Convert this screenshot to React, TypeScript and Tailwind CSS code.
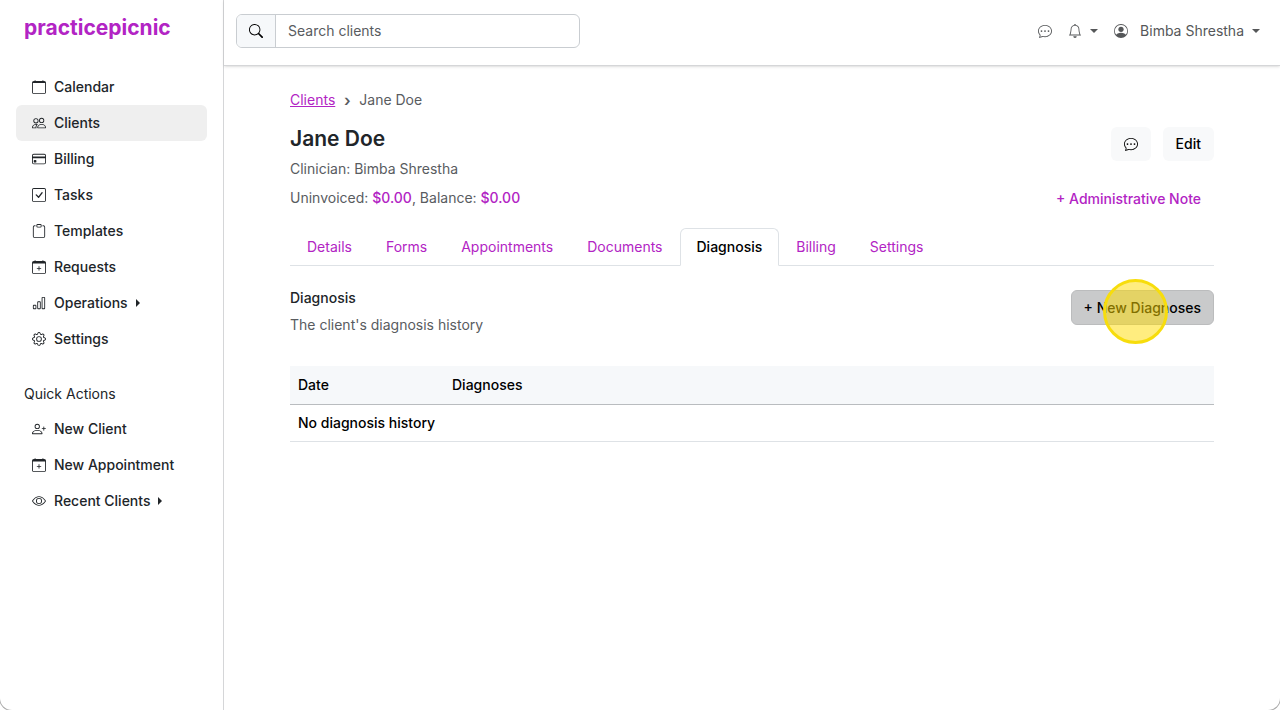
import { useState } from 'react';
import type { IconType } from 'react-icons';
import {
  BsBarChart,
  BsBell,
  BsChatDots,
  BsCheckSquare,
  BsClipboard,
  BsEye,
  BsGear,
  BsPeople,
  BsPersonCircle,
  BsPersonPlus,
  BsSearch,
} from 'react-icons/bs';

type NavItem = {
  label: string;
  icon: IconType;
  hasMenu?: boolean;
};

// Calendar outline with a solid header bar
const CalendarIcon: IconType = ({ className }) => (
  <svg viewBox="0 0 16 16" fill="currentColor" className={className}>
    <path d="M3.5 0a.5.5 0 0 1 .5.5V1h8V.5a.5.5 0 0 1 1 0V1h1a2 2 0 0 1 2 2v11a2 2 0 0 1-2 2H2a2 2 0 0 1-2-2V3a2 2 0 0 1 2-2h1V.5a.5.5 0 0 1 .5-.5zM1 3.5V14a1 1 0 0 0 1 1h12a1 1 0 0 0 1-1V3.500z" />
  </svg>
);

const CalendarPlusIcon: IconType = ({ className }) => (
  <svg viewBox="0 0 16 16" fill="currentColor" className={className}>
    <path d="M3.5 0a.5.5 0 0 1 .5.5V1h8V.5a.5.5 0 0 1 1 0V1h1a2 2 0 0 1 2 2v11a2 2 0 0 1-2 2H2a2 2 0 0 1-2-2V3a2 2 0 0 1 2-2h1V.5a.5.5 0 0 1 .5-.5zM1 4v10a1 1 0 0 0 1 1h12a1 1 0 0 0 1-1V4z" />
    <path d="M8 6.8a.5.5 0 0 1 .5.5V9h1.700a.5.5 0 0 1 0 1H8.500v1.700a.5.5 0 0 1-1 0V10H5.800a.5.5 0 0 1 0-1h1.700V7.300a.5.5 0 0 1 .5-.5z" />
  </svg>
);

const CardIcon: IconType = ({ className }) => (
  <svg viewBox="0 0 16 16" fill="currentColor" className={className}>
    <path d="M0 4a2 2 0 0 1 2-2h12a2 2 0 0 1 2 2v8a2 2 0 0 1-2 2H2a2 2 0 0 1-2-2zm2-1a1 1 0 0 0-1 1v1h14V4a1 1 0 0 0-1-1zm13 4H1v5a1 1 0 0 0 1 1h12a1 1 0 0 0 1-1z" />
    <path d="M2 10a1 1 0 0 1 1-1h1a1 1 0 0 1 1 1v1a1 1 0 0 1-1 1H3a1 1 0 0 1-1-1z" />
  </svg>
);

const mainNav: NavItem[] = [
  { label: 'Calendar', icon: CalendarIcon },
  { label: 'Clients', icon: BsPeople },
  { label: 'Billing', icon: CardIcon },
  { label: 'Tasks', icon: BsCheckSquare },
  { label: 'Templates', icon: BsClipboard },
  { label: 'Requests', icon: CalendarPlusIcon },
  { label: 'Operations', icon: BsBarChart, hasMenu: true },
  { label: 'Settings', icon: BsGear },
];

const quickActions: NavItem[] = [
  { label: 'New Client', icon: BsPersonPlus },
  { label: 'New Appointment', icon: CalendarPlusIcon },
  { label: 'Recent Clients', icon: BsEye, hasMenu: true },
];

const tabs = ['Details', 'Forms', 'Appointments', 'Documents', 'Diagnosis', 'Billing', 'Settings'];

const CaretRight = () => (
  <svg viewBox="0 0 4 8" fill="currentColor" className="ml-2 h-2 w-1">
    <path d="M0 0l4 4-4 4z" />
  </svg>
);

const CaretDown = () => (
  <svg viewBox="0 0 8 4" fill="currentColor" className="h-1 w-2">
    <path d="M0 0h8L4 4z" />
  </svg>
);

const NavList = ({ items, active }: { items: NavItem[]; active?: string }) => (
  <ul>
    {items.map(({ label, icon: Icon, hasMenu }) => (
      <li key={label}>
        <a
          href="#"
          className={`flex h-9 items-center rounded-md px-4 ${label === active ? 'bg-[#efefef]' : 'hover:bg-gray-50'}`}
        >
          <Icon className="mr-2 h-3.5 w-3.5 shrink-0" />
          {label}
          {hasMenu && <CaretRight />}
        </a>
      </li>
    ))}
  </ul>
);

const Sidebar = () => (
  <aside className="w-56 shrink-0 border-r border-[#d5d6d8] px-4 pt-3 text-[#212529]">
    <a href="#" className="block px-2 text-[21px] leading-8 font-bold text-[#b224c4]">
      practicepicnic
    </a>
    <nav className="mt-[25px]">
      <NavList items={mainNav} active="Clients" />
      <h2 className="mt-5 flex h-[34px] items-center px-2 font-normal">Quick Actions</h2>
      <NavList items={quickActions} />
    </nav>
  </aside>
);

const Header = () => (
  <header className="flex h-[66px] items-start justify-between border-b border-[#d5d6d8] px-3 pt-3.5 shadow-sm">
    <div className="flex h-[34px] w-[344px] overflow-hidden rounded-md border border-[#c9cdd1]">
      <button aria-label="Search" className="flex w-[39px] items-center justify-center border-r border-[#c9cdd1] bg-[#f6f8fa]">
        <BsSearch size={14} />
      </button>
      <input
        type="text"
        aria-label="Search clients"
        placeholder="Search clients"
        className="min-w-0 flex-1 px-3 font-normal placeholder:text-[#595c5f] focus:outline-none"
      />
    </div>
    <div className="flex h-[34px] items-center pr-2 text-[#555759]">
      <button aria-label="Messages">
        <BsChatDots size={14} />
      </button>
      <button aria-label="Notifications" className="ml-4 flex items-center gap-2">
        <BsBell size={14} />
        <CaretDown />
      </button>
      <button className="ml-4 flex items-center">
        <BsPersonCircle size={14} className="mr-3" />
        <span className="mr-2 font-normal">Bimba Shrestha</span>
        <CaretDown />
      </button>
    </div>
  </header>
);

const App = () => {
  const [activeTab, setActiveTab] = useState('Diagnosis');

  return (
    <div className="flex min-h-screen rounded-b-xl bg-white font-['Inter',sans-serif] text-sm font-medium text-black shadow-[0_0_0_1px_#aaaaaa]">
      <Sidebar />
      <div className="min-w-0 flex-1">
        <Header />
        <main className="px-[66px] pt-6">
          {/* Breadcrumb */}
          <nav aria-label="Breadcrumb" className="flex items-center gap-2 leading-5 font-normal text-[#595c5f]">
            <a href="#" className="text-[#b224c4] underline">
              Clients
            </a>
            <span className="w-2 text-center text-base leading-5 font-semibold">›</span>
            <span>Jane Doe</span>
          </nav>

          {/* Client summary */}
          <div className="mt-[15px] flex justify-between">
            <div className="font-normal text-[#595c5f]">
              <h1 className="text-[21px] leading-7 font-semibold text-[#212529]">Jane Doe</h1>
              <p className="mt-1.5 leading-5">Clinician: Bimba Shrestha</p>
              <p className="mt-[7px] leading-6">
                Uninvoiced: <span className="font-medium text-[#b224c4]">$0.00</span>, Balance:{' '}
                <span className="font-medium text-[#b224c4]">$0.00</span>
              </p>
            </div>
            <div className="flex flex-col items-end pt-0.5">
              <div className="flex gap-3">
                <button aria-label="Message client" className="flex h-[34px] w-10 items-center justify-center rounded-md bg-[#f8f9fa]">
                  <BsChatDots size={14} />
                </button>
                <button className="h-[34px] rounded-md bg-[#f8f9fa] px-[13px]">Edit</button>
              </div>
              <button className="mt-[21px] h-[34px] px-[13px] text-[#b224c4]">+ Administrative Note</button>
            </div>
          </div>

          {/* Tabs */}
          <div role="tablist" className="mt-3 flex border-b border-[#dee2e6] font-normal">
            {tabs.map((tab) => (
              <button
                key={tab}
                role="tab"
                aria-selected={tab === activeTab}
                onClick={() => setActiveTab(tab)}
                className={`-mb-px h-[38px] rounded-t-md border px-4 ${
                  tab === activeTab ? 'border-[#dee2e6] border-b-white bg-white font-medium' : 'border-transparent text-[#b224c4]'
                }`}
              >
                {tab}
              </button>
            ))}
          </div>

          {/* Diagnosis history */}
          <section className="pt-6">
            <div className="flex items-start justify-between">
              <div>
                <h2 className="leading-4 text-[#212529]">Diagnosis</h2>
                <p className="mt-[7px] leading-6 font-normal text-[#595c5f]">The client's diagnosis history</p>
              </div>
              <div className="relative">
                <button className="h-[35px] rounded-md border border-[#bbbcbd] bg-[#c9cacb] px-3">+ New Diagnoses</button>
                <span className="pointer-events-none absolute -top-[11px] right-[46px] size-[65px] rounded-full border-3 border-[#f7dd0c] bg-[#ffdc00]/50" />
              </div>
            </div>
            <table className="mt-[29px] w-full table-fixed text-left">
              <thead>
                <tr className="h-[38px] border-b border-[#b9bcbf] bg-[#f6f8fa]">
                  <th className="w-[154px] px-2 font-medium">Date</th>
                  <th className="px-2 font-medium">Diagnoses</th>
                </tr>
              </thead>
              <tbody>
                <tr className="h-[37px] border-b border-[#dee2e6]">
                  <td colSpan={2} className="px-2">
                    No diagnosis history
                  </td>
                </tr>
              </tbody>
            </table>
          </section>
        </main>
      </div>
    </div>
  );
};

export default App;
